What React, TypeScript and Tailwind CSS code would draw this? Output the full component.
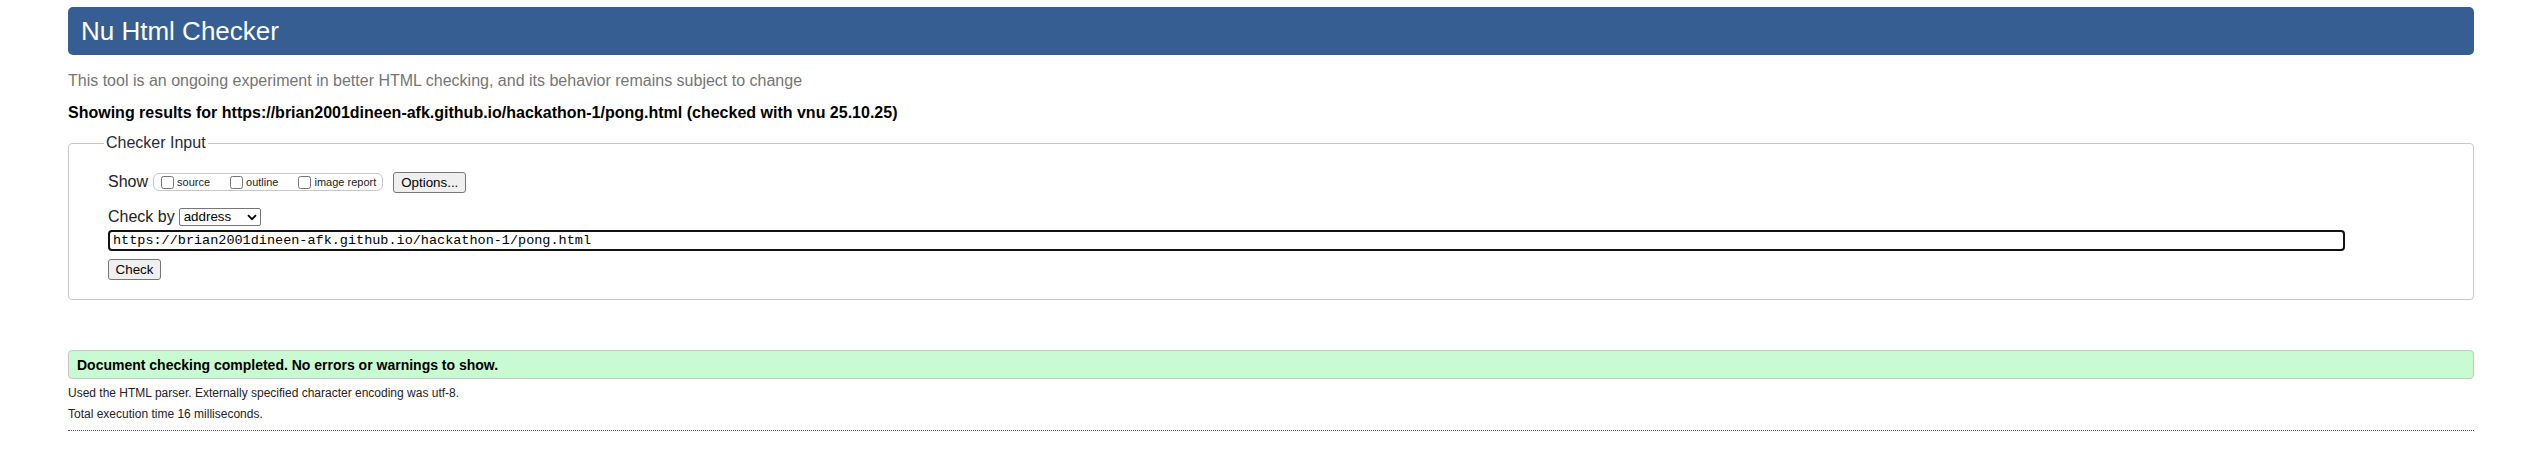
import { useState } from "react";

// small chevron used for the fake select arrow
function Chevron() {
  return (
    <svg width="10" height="7" viewBox="0 0 10 7" className="pointer-events-none absolute right-[4px] top-[6px]">
      <path d="M1 1.2l4 4 4-4" fill="none" stroke="#000" strokeWidth="1.8" />
    </svg>
  );
}

const options = ["source", "outline", "image report"];

export default function App() {
  const [url, setUrl] = useState("https://brian2001dineen-afk.github.io/hackathon-1/pong.html");
  const [checkBy, setCheckBy] = useState("address");

  return (
    <div className="min-h-[462px] bg-white pl-[68px] pr-[48px] pt-[7px] font-['Liberation_Sans',Arial,sans-serif] text-[#222]">
      <header className="h-[48px] rounded-[5px] bg-[#365e92] px-[13px] text-[26px] leading-[48px] text-white">
        Nu Html Checker
      </header>

      <p className="mt-[17px] text-[16px] leading-[18px] text-[#757575]">
        This tool is an ongoing experiment in better HTML checking, and its behavior remains subject to change
      </p>
      <p className="mt-[14px] text-[16px] font-bold leading-[18px] text-black">
        Showing results for https://brian2001dineen-afk.github.io/hackathon-1/pong.html (checked with vnu 25.10.25)
      </p>

      <form onSubmit={(e) => e.preventDefault()}>
        <fieldset className="mt-[12px] rounded-[4px] border border-[#c8c8c8] pl-[35px] pb-[19px]">
          <legend className="px-[2px] text-[16px] leading-[18px] text-[#1f2a3c]">Checker Input</legend>

          <div className="ml-[4px] pt-[19px]">
            {/* show options */}
            <div className="flex h-[22px] items-center">
              <span className="text-[16px] leading-[18px]">Show</span>
              <div className="ml-[5px] flex h-[18px] items-center rounded-[6px] border border-[#c8c8c8] pl-[3px] pr-[6px]">
                {options.map((o, i) => (
                  <label key={o} className={"flex items-center text-[11px] leading-[12px] " + (i < options.length - 1 ? "mr-[16px]" : "")}>
                    <input type="checkbox" className="ml-[4px] mr-[3px] h-[13px] w-[13px]" />
                    {o}
                  </label>
                ))}
              </div>
              <button
                type="button"
                className="ml-[10px] h-[21px] rounded-[3px] border border-[#767676] bg-[#efefef] px-[7px] text-[13.33px] leading-[19px] text-black"
              >
                Options...
              </button>
            </div>

            {/* check by */}
            <div className="mt-[14px] flex h-[20px] items-center">
              <span className="text-[16px] leading-[18px]">Check by</span>
              <div className="relative ml-[4px]">
                <select
                  value={checkBy}
                  onChange={(e) => setCheckBy(e.target.value)}
                  className="block h-[18px] w-[82px] appearance-none rounded-[2px] border border-[#767676] bg-white pl-[4px] text-[13.33px] leading-[16px] text-black"
                >
                  <option value="address">address</option>
                  <option value="file">file upload</option>
                  <option value="text">text input</option>
                </select>
                <Chevron />
              </div>
            </div>

            <input
              value={url}
              onChange={(e) => setUrl(e.target.value)}
              className="mt-[3px] block h-[21px] w-[2237px] rounded-[4px] border-2 border-[#111] px-[3px] font-['Liberation_Mono',monospace] text-[13.5px] leading-[16px] text-black outline-none"
            />

            <button
              type="submit"
              className="mt-[8px] block h-[21px] w-[53px] rounded-[3px] border border-[#767676] bg-[#efefef] text-[13.33px] leading-[19px] text-black"
            >
              Check
            </button>
          </div>
        </fieldset>
      </form>

      <div className="mt-[50px] h-[29px] rounded-[4px] border border-[#c8c8c8] bg-[#c8fbd1] px-[8px] pt-[2px] text-[14px] font-bold leading-[25px] text-black">
        Document checking completed. No errors or warnings to show.
      </div>

      <p className="mt-[4px] text-[12px] leading-[20px]">Used the HTML parser. Externally specified character encoding was utf-8.</p>
      <p className="mt-[1px] text-[12px] leading-[20px]">Total execution time 16 milliseconds.</p>

      <hr className="mt-[6px] border-0 border-t border-dotted border-[#555]" />
    </div>
  );
}
